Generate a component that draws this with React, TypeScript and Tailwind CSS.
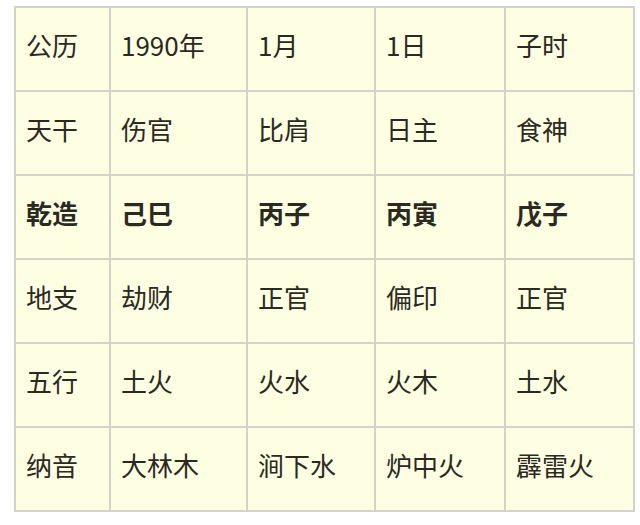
const rows: { cells: string[]; bold?: boolean }[] = [
  { cells: ["公历", "1990年", "1月", "1日", "子时"] },
  { cells: ["天干", "伤官", "比肩", "日主", "食神"] },
  { cells: ["乾造", "己巳", "丙子", "丙寅", "戊子"], bold: true },
  { cells: ["地支", "劫财", "正官", "偏印", "正官"] },
  { cells: ["五行", "土火", "火水", "火木", "土水"] },
  { cells: ["纳音", "大林木", "涧下水", "炉中火", "霹雷火"] },
];

const widths = ["w-[95px]", "w-[137px]", "w-[128px]", "w-[130px]", "w-[129px]"];

export default function App() {
  return (
    <div
      className="min-h-[525px] w-[640px] bg-white pt-[6px] pl-[14px]"
      style={{ fontFamily: '"Noto Sans CJK SC", "Noto Sans", sans-serif' }}
    >
      <table className="table-fixed border-collapse border-2 border-[#d2d2c8] bg-[#fefee2] text-[26px] text-[#2a2a22]">
        <colgroup>
          {widths.map((w, i) => (
            <col key={i} className={w} />
          ))}
        </colgroup>
        <tbody>
          {rows.map((row, r) => (
            <tr key={r} className="h-[84px]">
              {row.cells.map((c, i) => (
                <td
                  key={i}
                  className={`border-2 border-[#d2d2c8] pl-[10px] pb-[8px] align-middle leading-none ${
                    row.bold ? "font-bold" : "font-normal"
                  }`}
                >
                  {c}
                </td>
              ))}
            </tr>
          ))}
        </tbody>
      </table>
    </div>
  );
}
